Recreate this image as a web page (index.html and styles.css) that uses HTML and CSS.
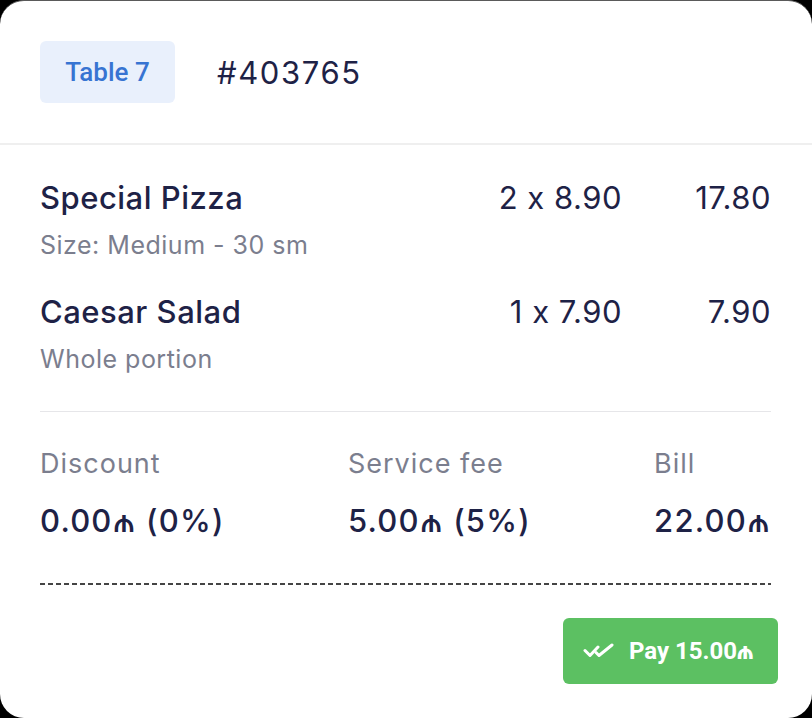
FILE: index.html
```html
<!DOCTYPE html>
<html>
<head>
<meta charset="utf-8">
<link rel="stylesheet" href="styles.css">
</head>
<body>
<div class="card">
  <div class="header">
    <span class="badge">Table 7</span>
    <span class="order">#403765</span>
  </div>
  <div class="body">
    <div class="items">
      <div class="item">
        <div class="row">
          <span class="name">Special Pizza</span>
          <span class="qty">2 x 8.90</span>
          <span class="total">17.80</span>
        </div>
        <div class="note">Size: Medium - 30 sm</div>
      </div>
      <div class="item">
        <div class="row">
          <span class="name">Caesar Salad</span>
          <span class="qty">1 x 7.90</span>
          <span class="total">7.90</span>
        </div>
        <div class="note">Whole portion</div>
      </div>
    </div>
    <div class="summary">
      <div class="col">
        <div class="label">Discount</div>
        <div class="value">0.00₼ (0%)</div>
      </div>
      <div class="col">
        <div class="label">Service fee</div>
        <div class="value">5.00₼ (5%)</div>
      </div>
      <div class="col">
        <div class="label">Bill</div>
        <div class="value">22.00₼</div>
      </div>
    </div>
    <div class="dash"></div>
    <div class="footer">
      <button class="pay">
        <svg class="icon" width="32" height="16" viewBox="0 0 32 16" fill="none" stroke="#fff" stroke-width="3" stroke-linecap="round" stroke-linejoin="round">
          <path d="M2 7.5 L7 12.5 L15 4"/>
          <path d="M13 9.5 L16 12.5 L29 2"/>
        </svg>
        <span>Pay 15.00₼</span>
      </button>
    </div>
  </div>
</div>
</body>
</html>
```
FILE: styles.css
```css
* { box-sizing: border-box; }
html, body { margin: 0; padding: 0; background: #000; }
body { width: 812px; height: 718px; overflow: hidden; }
.card {
  width: 812px;
  height: 718px;
  background: #fff;
  border-radius: 24px;
  border-top: 1px solid #5a5a5a;
  font-family: "Inter", "DejaVu Sans", sans-serif;
  font-feature-settings: "calt" 0;
  color: #1e2246;
}
.header {
  display: flex;
  align-items: center;
  gap: 42px;
  padding: 40px 40px 40px;
  border-bottom: 2px solid #efefef;
  height: 144px;
}
.badge {
  display: inline-flex;
  align-items: center;
  justify-content: center;
  width: 135px;
  height: 62px;
  background: #e9f0fc;
  border-radius: 6px;
  color: #3774d2;
  font-family: "Roboto", sans-serif;
  font-size: 26px;
  font-weight: 500;
}
.order {
  font-size: 31px;
  font-weight: 400;
  letter-spacing: 1.6px;
}
.body { padding: 34px 41px 0 40px; }
.items {
  display: flex;
  flex-direction: column;
  gap: 32px;
  padding-bottom: 36px;
  border-bottom: 1px solid #e6e6e9;
}
.item { display: flex; flex-direction: column; gap: 14px; }
.row {
  display: flex;
  align-items: center;
  height: 36px;
  font-size: 31px;
  letter-spacing: 0.5px;
}
.name { flex: 1; font-weight: 500; }
.qty { width: 200px; text-align: right; }
.total { width: 149px; text-align: right; }
.note {
  height: 32px;
  line-height: 32px;
  font-size: 25px;
  letter-spacing: 0.5px;
  color: #7b7e8e;
}
.summary {
  display: flex;
  justify-content: space-between;
  padding-top: 36px;
}
.col { display: flex; flex-direction: column; gap: 23px; }
.label { height: 32px; line-height: 32px; font-size: 27px; letter-spacing: 1px; color: #7b7e8e; }
.value { height: 36px; line-height: 36px; font-size: 31px; font-weight: 500; letter-spacing: 1.2px; }
.dash {
  margin-top: 44px;
  height: 2px;
  background-image: linear-gradient(to right, #444 0 5px, transparent 5px 8px);
  background-size: 8px 2px;
  background-repeat: repeat-x;
}
.footer {
  display: flex;
  justify-content: flex-end;
  margin-top: 33px;
  margin-right: -7px;
}
.pay {
  display: flex;
  align-items: center;
  gap: 14px;
  width: 215px;
  height: 66px;
  padding: 0 0 0 20px;
  background: #5cc062;
  border: none;
  border-radius: 6px;
  color: #fff;
  font-family: "Roboto", sans-serif;
  font-size: 24px;
  font-weight: 700;
}
```
